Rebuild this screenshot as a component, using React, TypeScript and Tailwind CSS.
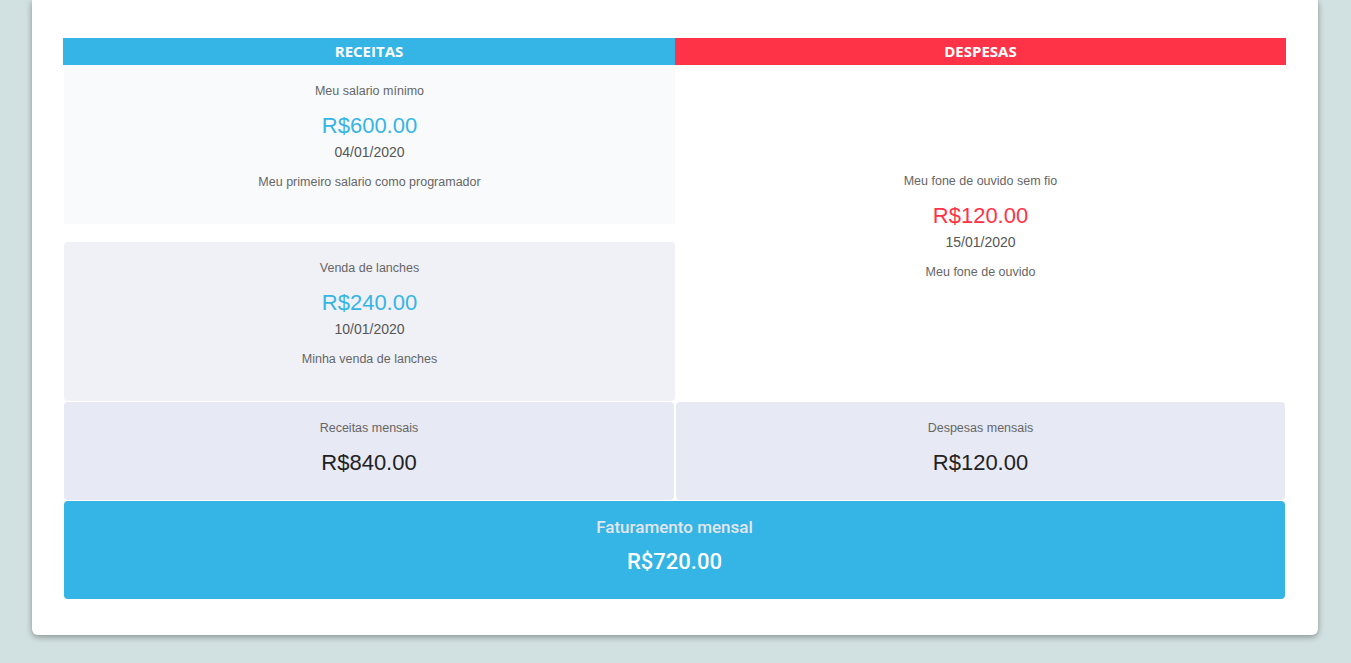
import React from 'react';

type Entry = { title: string; value: string; date: string; desc: string };

const receitas: Entry[] = [
  { title: 'Meu salario mínimo', value: 'R$600.00', date: '04/01/2020', desc: 'Meu primeiro salario como programador' },
  { title: 'Venda de lanches', value: 'R$240.00', date: '10/01/2020', desc: 'Minha venda de lanches' },
];

const despesas: Entry[] = [
  { title: 'Meu fone de ouvido sem fio', value: 'R$120.00', date: '15/01/2020', desc: 'Meu fone de ouvido' },
];

function EntryCard({ entry, color }: { entry: Entry; color: string }) {
  return (
    <div className="flex flex-col items-center text-center">
      <p className="text-[12.5px] leading-[14px] text-[#666]">{entry.title}</p>
      <p className={`mt-[16px] text-[22px] leading-[24px] ${color}`}>{entry.value}</p>
      <p className="mt-[7px] text-[14px] leading-[14px] text-[#555]">{entry.date}</p>
      <p className="mt-[16px] text-[12.5px] leading-[14px] text-[#666]">{entry.desc}</p>
    </div>
  );
}

export default function App() {
  return (
    <div className="min-h-screen bg-[#d1e0e0] pl-[32px] pr-[33px]" style={{ fontFamily: '"Liberation Sans", Arial, sans-serif' }}>
      <div className="w-[1286px] rounded-b-md bg-white px-[31px] pt-[38px] pb-[36px] shadow-[0_2px_6px_rgba(0,0,0,0.35)]">
        {/* Header */}
        <div className="grid grid-cols-[612px_611px]">
          <div className="flex h-[27px] items-center justify-center bg-[#34b5e5] text-[15px] font-bold text-white" style={{ fontFamily: '"Open Sans", sans-serif' }}>
            RECEITAS
          </div>
          <div className="flex h-[27px] items-center justify-center bg-[#ff3347] text-[15px] font-bold text-white" style={{ fontFamily: '"Open Sans", sans-serif' }}>
            DESPESAS
          </div>
        </div>

        {/* Entries */}
        <div className="grid grid-cols-[612px_611px]">
          <div className="flex flex-col pl-px">
            <div className="h-[159px] bg-[#f9fafc] pt-[19px]">
              <EntryCard entry={receitas[0]} color="text-[#36b5e5]" />
            </div>
            <div className="mt-[18px] h-[159px] rounded-sm bg-[#f0f1f7] pt-[19px]">
              <EntryCard entry={receitas[1]} color="text-[#36b5e5]" />
            </div>
          </div>
          <div className="flex flex-col justify-center pb-[14px]">
            <EntryCard entry={despesas[0]} color="text-[#ff3347]" />
          </div>
        </div>

        {/* Monthly totals */}
        <div className="mt-px grid grid-cols-[610px_609px] gap-[2px] pl-px">
          <div className="flex h-[98px] flex-col items-center rounded-sm bg-[#e7e9f5] pt-[19px]">
            <p className="text-[12.5px] leading-[14px] text-[#666]">Receitas mensais</p>
            <p className="mt-[16px] text-[22px] leading-[24px] text-[#222]">R$840.00</p>
          </div>
          <div className="flex h-[98px] flex-col items-center rounded-sm bg-[#e7e9f5] pt-[19px]">
            <p className="text-[12.5px] leading-[14px] text-[#666]">Despesas mensais</p>
            <p className="mt-[16px] text-[22px] leading-[24px] text-[#222]">R$120.00</p>
          </div>
        </div>

        <div className="ml-px mt-px flex h-[98px] w-[1221px] flex-col items-center rounded-sm bg-[#34b5e5] pt-[16px]" style={{ fontFamily: 'Roboto, sans-serif' }}>
          <p className="text-[17px] font-medium leading-[20px] text-[#e3e6ee]">Faturamento mensal</p>
          <p className="mt-[13px] text-[22px] font-medium leading-[24px] text-white">R$720.00</p>
        </div>
      </div>
    </div>
  );
}
